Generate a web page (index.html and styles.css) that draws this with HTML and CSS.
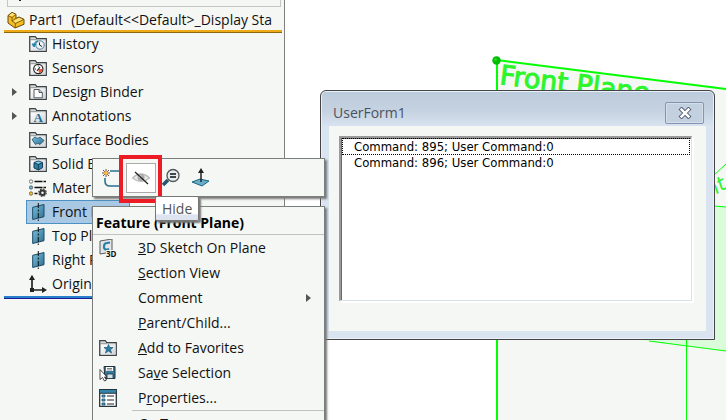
FILE: index.html
```html
<!DOCTYPE html>
<html lang="en">
<head>
<meta charset="utf-8">
<title>Part1</title>
<link rel="stylesheet" href="styles.css">
</head>
<body>
<svg class="defs" aria-hidden="true">
  <defs>
    <linearGradient id="steel" x1="0" y1="0" x2="1" y2="1"><stop offset="0" stop-color="#7cc0dc"/><stop offset="1" stop-color="#2a6f91"/></linearGradient>
    <linearGradient id="paper" x1="0" y1="0" x2="1" y2="1"><stop offset="0" stop-color="#fff"/><stop offset="1" stop-color="#cfd3d8"/></linearGradient>
    <symbol id="folder" viewBox="0 0 18 18">
      <path d="M.7 16.3V1.7h5.6l1.5 2h9.5v12.6z" fill="#d5d8d9" stroke="#3d4245" stroke-width="1.2"/>
      <path d="M2 5.5h14.5v10H2z" fill="url(#paper)"/>
      <path d="M1 4.6h7" stroke="#8a8f92" stroke-width=".8"/>
    </symbol>
    <symbol id="plane" viewBox="0 0 18 18">
      <path d="M3.7 4.3 15 1.5v12.2L3.7 16.5z" fill="url(#steel)" stroke="#194b66" stroke-width="1"/>
      <path d="M9.3 0v18" stroke="#111" stroke-width="1" stroke-dasharray="5 1.5 2 1.5"/>
    </symbol>
  </defs>
</svg>
<main class="workspace">
  <aside class="panel">
    <div class="filter"><i></i></div>
    <div class="root">
      <svg class="icon" viewBox="0 0 18 18"><path d="M1 4.5 5 1.3l4 2v4L12 6l5 2.3v5L8 17l-7-5z" fill="#f3bd25" stroke="#6a4a08" stroke-width="1"/><path d="m1 4.5 4 2 4-3.2M5 6.5V10l3.5 2.5L17 8.3M8.3 12.5V17M5 10l4-2.7" fill="none" stroke="#7a560c" stroke-width=".9"/><path d="m2 4.4 3-2.3 3 1.4L5 5.6zM6.3 9.9 12 7l3.5 1.5-7 3z" fill="#ffe27a"/></svg>
      <span>Part1  (Default&lt;&lt;Default&gt;_Display Sta</span>
    </div>
    <ul class="tree">
      <li><i class="arrow"></i><div class="node"><svg class="icon" viewBox="0 0 18 18"><use href="#folder"/><circle cx="11" cy="10" r="4.2" fill="#e9f3f8" stroke="#527d96"/><path d="M10.5 7.5V10l2.5 1.5" fill="none" stroke="#222"/><path d="M9 5.7C6 6.5 5 8 5 10M3 9l2 3 2-3z" fill="#2586b4" stroke="#2586b4"/></svg>History</div></li>
      <li><i class="arrow"></i><div class="node"><svg class="icon" viewBox="0 0 18 18"><use href="#folder"/><circle cx="9.3" cy="10" r="4.6" fill="#fff" stroke="#222" stroke-width="1.2"/><path d="M9.3 10h4.2a4 4 0 0 1-3.5 4z" fill="#ec5131"/><path d="m8 12 3-4" stroke="#222" stroke-width="1.2"/><path d="M6 10h1M9.3 6.5v1" stroke="#222"/></svg>Sensors</div></li>
      <li><i class="arrow open"></i><div class="node"><svg class="icon" viewBox="0 0 18 18"><use href="#folder"/><path d="M5 6.5h5l3.3 3v5.3H5z" fill="#fff" stroke="#565b5e"/><path d="M10 6.5v3h3.3" fill="#c7ccd0" stroke="#565b5e"/></svg>Design Binder</div></li>
      <li><i class="arrow open"></i><div class="node"><svg class="icon" viewBox="0 0 18 18"><use href="#folder"/><text class="glyph-a" x="4.5" y="15">A</text></svg>Annotations</div></li>
      <li><i class="arrow"></i><div class="node"><svg class="icon" viewBox="0 0 18 18"><use href="#folder"/><path d="M3 8.5 6 6c2 2 4 1 5 .2l4 3.3-4 4c-2-1.5-3-1-4.5 0z" fill="url(#steel)" stroke="#174a64" stroke-width=".8"/></svg>Surface Bodies</div></li>
      <li><i class="arrow"></i><div class="node"><svg class="icon" viewBox="0 0 18 18"><use href="#folder"/><path d="m5 7.5 4.5-1.5 4 1.5v5.2l-4 2.300L5 13z" fill="#2d7fa4" stroke="#153f56"/><path d="m5 7.5 4.3 2 4.2-2M9.3 9.5V15" fill="none" stroke="#153f56"/><path d="m6 7.5 3.5-1 3 1-3.2 1.3z" fill="#8bcbe5"/></svg>Solid Bodies</div></li>
      <li><i class="arrow"></i><div class="node"><svg class="icon wide" viewBox="0 0 18 18"><g stroke="#555" stroke-width=".8"><circle cx="2" cy="2.5" r="1.7" fill="#fff"/><circle cx="2" cy="8.500" r="1.7" fill="#62b7df"/><circle cx="2" cy="14.5" r="1.7" fill="#ffc421"/></g><path d="M5.500 2.500H17M5.500 8.500H17M5.500 14.500h3" stroke="#111" stroke-width="1.4" stroke-dasharray="8 1"/><circle cx="13.500" cy="13.700" r="2.300" fill="none" stroke="#333" stroke-width="2"/><circle cx="13.500" cy="13.700" r="3.700" fill="none" stroke="#333" stroke-width="1.200" stroke-dasharray="1.600 1.300"/></svg>Material</div></li>
      <li><i class="arrow"></i><div class="node selected"><svg class="icon"><use href="#plane"/></svg>Front Plane</div></li>
      <li><i class="arrow"></i><div class="node"><svg class="icon"><use href="#plane"/></svg>Top Plane</div></li>
      <li><i class="arrow"></i><div class="node"><svg class="icon"><use href="#plane"/></svg>Right Plane</div></li>
      <li><i class="arrow"></i><div class="node"><svg class="icon" viewBox="0 0 18 18"><path d="M3 15V3M3 15h11" stroke="#222" stroke-width="1.7"/><path d="M0 5 3-.2 6 5zM13 12l5 3-5 3zM1 13h4v4H1z" fill="#222"/></svg>Origin</div></li>
    </ul>
  </aside>
  <section class="viewport" aria-label="Graphics area">
    <svg class="scene" viewBox="285 0 441 420" preserveAspectRatio="xMinYMin slice">
      <path d="M497 60 726 89V420H497z" fill="#f5f7f4"/>
      <path d="M600 195 726 207V351L600 335z" fill="#dbfcdb"/>
      <g fill="none" stroke="#0f0">
        <path d="M497 60V420M497 60 726 89" stroke-width="2"/>
        <path d="M714 206 726 207M649 341 726 351M686.500 340V420M713 176 726 164"/>
      </g>
      <circle cx="496.500" cy="60.500" r="4.200" fill="#0b0"/>
      <circle cx="495.500" cy="59.500" r="1.500" fill="#2d2"/>
      <text class="plane-label" transform="translate(499 84) rotate(7)">Front Plane</text>
      <text class="plane-label side" transform="translate(710 198) rotate(-30)">nt</text>
    </svg>
  </section>
</main>

<section class="dialog" aria-labelledby="form-title">
  <header>
    <h1 id="form-title">UserForm1</h1>
    <button type="button" class="close" aria-label="Close"><svg viewBox="0 0 16 14"><path d="m4 3 8 8M12 3l-8 8" stroke="#4d5670" stroke-width="5" stroke-linecap="square"/><path d="m4 3 8 8M12 3l-8 8" stroke="#fff" stroke-width="3" stroke-linecap="square"/></svg></button>
  </header>
  <div class="client">
    <ul class="list">
      <li class="focus">Command: 895; User Command:0</li>
      <li>Command: 896; User Command:0</li>
    </ul>
  </div>
</section>

<nav class="menu">
  <h2>Feature (Front Plane)</h2>
  <button type="button"><svg class="icon" viewBox="0 0 18 18"><path d="m1 2 12-2v13L1 15z" fill="#e2e6e8" stroke="#565d61"/><path d="M11 3.500 8 4C5 4 5 6 5 8s1 3.500 5 2" fill="none" stroke="#287fa5" stroke-width="2.200"/><path d="M7 11h11v7H7z" fill="#f5f7f4"/><text class="glyph-3d" x="7" y="18">3D</text></svg><span><u>3</u>D Sketch On Plane</span></button>
  <button type="button"><i class="icon"></i><span><u>S</u>ection View</span></button>
  <button type="button"><i class="icon"></i><span>Comment</span><i class="arrow open"></i></button>
  <button type="button"><i class="icon"></i><span><u>P</u>arent/Child...</span></button>
  <button type="button"><svg class="icon" viewBox="0 0 18 18"><use href="#folder"/><path d="m9.500 5.500 1.300 3h3.200l-2.500 2.200 1 3.300-3-2-3 2 1-3.300L5 8.500h3.200z" fill="#287fa5" stroke="#174a64" stroke-width=".6"/></svg><span><u>A</u>dd to Favorites</span></button>
  <button type="button"><svg class="icon" viewBox="0 0 18 18"><path d="M5 2.500h11v12H6z" fill="#347a9b" stroke="#20323c"/><path d="M7 3h7v4H7z" fill="#fff"/><path d="M8 4.500h5M8 6h5" stroke="#666" stroke-width=".8"/><path d="M8 10h6v4.500H8z" fill="#d5e2e8" stroke="#20323c" stroke-width=".8"/><path d="M1 5.500v10l2.500-2 2 3.500 2-1-2-3H8z" fill="#fff" stroke="#333" stroke-width=".9"/></svg><span>Sa<u>v</u>e Selection</span></button>
  <button type="button"><svg class="icon" viewBox="0 0 18 18"><path d="M.7.7h16.600v16.600H.7z" fill="#fff" stroke="#24343d" stroke-width="1.300"/><path d="M1 1h16v3H1z" fill="#3285aa"/><path d="M1 4.300h16" stroke="#24343d"/><path d="M3 6h3v2H3zM3 10h3v2H3zM3 14h3v2H3z" fill="#58a9c9" stroke="#174a64" stroke-width=".8"/><path d="M8 7h7M8 11h7M8 15h7" stroke="#222" stroke-width="1.200"/></svg><span>P<u>r</u>operties...</span></button>
  <hr>
  <button type="button"><i class="icon"></i><span><u>G</u>o To...</span></button>
</nav>

<div class="toolbar" role="toolbar" aria-label="Context toolbar">
  <button type="button" aria-label="Edit Sketch"><svg viewBox="0 0 20 20"><path d="M9 3h10M4 10v3q0 5 5 5h10" fill="none" stroke="#287292" stroke-width="1.600"/><path d="M5 1v8M1 5h8M2 2l6 6M8 2 2 8" stroke="#3d2412" stroke-width=".8"/><circle cx="5" cy="5" r="2" fill="#ffb64b"/></svg></button>
  <button type="button" class="active" aria-label="Hide"><svg viewBox="0 0 20 20"><path d="M1.500 10q8.500-8 17 0-8.500 7-17 0z" fill="#ececec" stroke="#bbb" stroke-width="1.200"/><circle cx="10" cy="9.500" r="3.600" fill="#aaa"/><circle cx="9" cy="8.500" r="1.300" fill="#eee"/><path d="m4 4 13 12" stroke="#222" stroke-width="1.300"/></svg></button>
  <button type="button" aria-label="Zoom to Selection"><svg viewBox="0 0 20 20"><path d="m2 17 5-5" stroke="#28566e" stroke-width="3.500"/><circle cx="12" cy="7.500" r="6" fill="#e4edf1" stroke="#555" stroke-width="1.300"/><path d="M9 6h6M9 9h6" stroke="#111" stroke-width="1.700"/></svg></button>
  <button type="button" aria-label="Normal To"><svg viewBox="0 0 20 20"><path d="m1 14 8-3 9 2-7 5z" fill="#67aecb" stroke="#1e6482"/><path d="M10 14V4" stroke="#222" stroke-width="1.500"/><path d="m7 5 3-5 3 5z" fill="#222"/></svg></button>
</div>
<div class="highlight"></div>
<div class="tooltip" role="tooltip">Hide</div>
</body>
</html>
```
FILE: styles.css
```css
* { box-sizing: border-box; }
body {
  margin: 0;
  min-height: 100vh;
  overflow: hidden;
  background: #fff;
  color: #111;
  font: 14px/24px "Open Sans", "Noto Sans", sans-serif;
}
button { font: inherit; color: inherit; background: none; border: 0; padding: 0; }
ul { list-style: none; margin: 0; padding: 0; }
.defs { position: absolute; width: 0; height: 0; }
.icon { width: 18px; height: 18px; flex: none; }
.glyph-a { font: bold 13px "Liberation Serif", serif; fill: #1e6c93; }
.glyph-3d { font: bold 8px "Open Sans", sans-serif; fill: #111; }

.workspace { display: grid; grid-template-columns: 285px 1fr; height: 100vh; }
.panel { background: #f5f7f4; border-right: 1px solid #808080; padding: 0 2px 0 4px; overflow: hidden; }
.filter { height: 7px; margin: 0 1px 3px 3px; border: solid #c3c6c3; border-width: 0 1px 1px; padding-left: 11px; }
.filter i { display: block; width: 2px; height: 1px; background: #222; }
.root {
  display: flex; align-items: center; gap: 4px; height: 22px; padding: 0 0 1px 3px;
  white-space: pre; overflow: hidden; border-bottom: 2px solid #edab18; box-shadow: 0 1px #8a680b;
}
.tree { border-bottom: 2px solid #287fcb; box-shadow: 0 1px #1c1c96; }
.tree li { display: flex; height: 24px; }
.tree li > .arrow { width: 22px; padding-left: 8px; }
.arrow { display: flex; align-items: center; }
.arrow.open::before { content: ""; border: solid transparent; border-width: 4px 0 4px 5px; border-left-color: #555; }
.node { display: flex; align-items: center; gap: 5px; width: 104px; padding-left: 2px; border: 1px solid transparent; white-space: nowrap; line-height: 22px; }
.node.selected { background: #a8c8e4; border-color: #4b91c4; }

.viewport { min-width: 0; overflow: hidden; background: #fff; }
.scene { display: block; width: 100%; height: 100%; }
.plane-label { font: 27px "DejaVu Sans", sans-serif; fill: #2cf52c; stroke: #2cf52c; stroke-width: 1px; }
.plane-label.side { font-size: 20px; font-style: italic; stroke-width: 0; }

.dialog {
  position: absolute; left: 320px; top: 90px; width: 395px;
  padding: 0 8px 8px; border: 1px solid #444; border-radius: 6px 6px 0 0;
  background: linear-gradient(#bccbdb, #c5d2e1 20px, #d9e4f0 36px);
  box-shadow: inset 0 0 0 1px #e9f0f7;
}
.dialog header { display: flex; align-items: center; justify-content: space-between; height: 35px; padding: 8px 2px 0 4px; }
.dialog h1 { margin: 0; font-size: 14px; font-weight: 400; color: #4b535e; }
.close { width: 39px; height: 22px; border: 1px solid #8493b0; border-radius: 2px; background: #c3d0df; box-shadow: inset 0 0 0 1px #d5dfea; display: grid; place-items: center; }
.close svg { width: 14px; height: 12px; }
.client { background: #f5f7f4; padding: 10px 14px 30px 10px; }
.list {
  height: 165px; padding: 0 1px 0 0; background: #fff; border: 1px solid #d9e3ee;
  border-top: 2px solid #9a9a9a; border-left: 2px solid #9a9a9a;
  box-shadow: 2px 2px #fff, inset 1px 1px #686868;
  font-family: "DejaVu Sans Condensed", "DejaVu Sans", sans-serif; font-size: 13px; color: #000;
}
.list li { padding-left: 11px; margin-left: 1px; border: 1px solid transparent; line-height: 14px; height: 16px; }
.list .focus { height: 17px; line-height: 15px; border: 1px dotted #000; }

.menu, .toolbar { position: absolute; left: 92px; width: 233px; background: #f5f7f4; border: 1px solid #7b7f7b; box-shadow: 2px 2px 2px #777; }
.menu { top: 206px; }
.menu h2 { margin: 0; padding: 4px 3px 0; height: 28px; border-bottom: 1px solid #bfc2bf; font-size: 14px; line-height: 24px; color: #000; }
.menu button { display: grid; grid-template-columns: 18px 1fr 18px; column-gap: 21px; align-items: center; width: 100%; height: 25px; padding-left: 6px; text-align: left; }
.menu hr { margin: 0 0 0 39px; border: 0; border-top: 1px solid #bfc2bf; }
.toolbar { top: 158px; display: flex; align-items: center; height: 39px; padding: 3px; }
.toolbar button { width: 30px; height: 30px; display: grid; place-items: center; }
.toolbar svg { width: 20px; height: 20px; }
.toolbar .active { background: #fff; border: 1px solid #aaa; }
.highlight { position: absolute; left: 119px; top: 155px; width: 43px; height: 48px; border: 4px solid #ed1c24; }
.tooltip { position: absolute; left: 155px; top: 196px; padding: 0 6px; border: 1px solid #777; border-radius: 2px; background: linear-gradient(#fff, #fff 70%, #dde4ef 80%); box-shadow: 2px 2px 2px #777; color: #555; line-height: 23px; }
```
